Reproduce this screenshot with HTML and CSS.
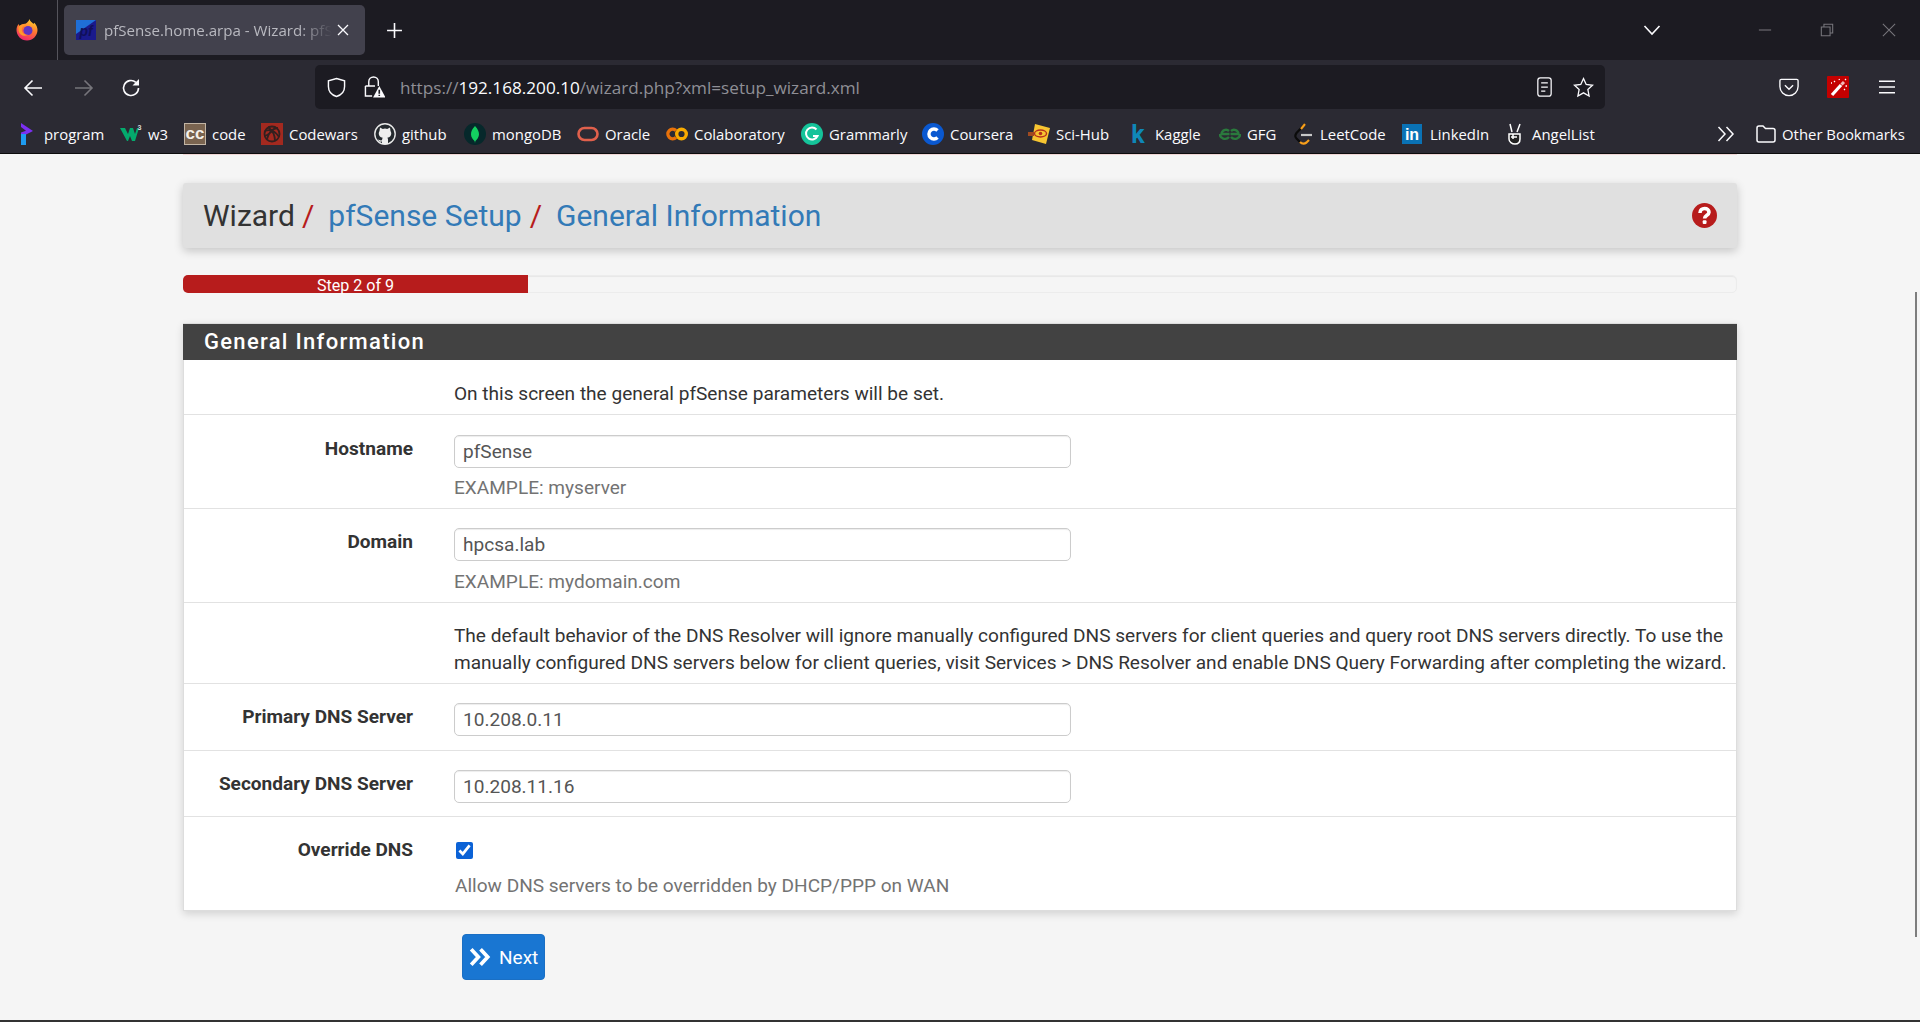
FILE: index.html
```html
<!DOCTYPE html>
<html lang="en">
<head>
<meta charset="utf-8">
<title>pfSense.home.arpa - Wizard: pfSense Setup: General Information</title>
<link rel="stylesheet" href="styles.css">
</head>
<body>
<header class="chrome">
  <div class="tabbar">
    <div class="ff-cell">
      <svg class="ff-logo" viewBox="0 0 22 22"><defs><linearGradient id="ffg" x1="0.7" y1="0" x2="0.3" y2="1"><stop offset="0" stop-color="#ffd52e"/><stop offset=".45" stop-color="#ff7a30"/><stop offset="1" stop-color="#f0226f"/></linearGradient></defs><path fill="url(#ffg)" d="M13.500 0c.3 2.200 2.500 3.200 4 5 .2-.5.5-1 .8-1.300C20.500 6 21.500 8.500 21.500 11c0 5.800-4.700 10.500-10.500 10.500S.5 16.800.5 11c0-2.300.8-4.500 2.200-6 .2.900.6 1.500 1.100 1.900C5 5.300 7 4.600 9.300 4.700c1.800-.9 3.700-2.500 4.200-4.700z"/><circle cx="12" cy="11.500" r="4.500" fill="#5f35c4"/><path fill="#ff9a2a" d="M2.500 8c2-2.500 5.500-3 7.500-1.800-2.800.3-4.500 2.300-4.200 4.800.3 3 3.200 5 6.200 4.700-3.800 2.300-8.500.5-9.300-3.800-.3-1.400-.3-2.800-.2-3.900z"/></svg>
    </div>
    <div class="tab">
      <svg class="favicon" viewBox="0 0 20 20"><rect width="20" height="20" fill="#1a1a8c"/><path fill="#1f6fd6" d="M0 0h20L0 14z"/><text x="3.500" y="15.500" class="fav-text">pf</text></svg>
      <span class="tab-title">pfSense.home.arpa - Wizard: pfSense Setup: General Information</span>
      <svg class="tab-close" viewBox="0 0 12 12"><path d="M1 1l10 10M11 1 1 11"/></svg>
    </div>
    <svg class="new-tab" viewBox="0 0 16 16"><path d="M8 1v14M1 8h14"/></svg>
    <div class="spring"></div>
    <svg class="tabs-list" viewBox="0 0 18 12"><path d="M1.500 2 9 10l7.500-8"/></svg>
    <svg class="win win-min" viewBox="0 0 16 16"><path d="M1 8h14"/></svg>
    <svg class="win win-res" viewBox="0 0 16 16"><path d="M1.500 4.500h10v10h-10zM4.500 4.500v-3h10v10h-3"/></svg>
    <svg class="win win-close" viewBox="0 0 16 16"><path d="M1 1l14 14M15 1 1 15"/></svg>
  </div>
  <div class="toolbar">
    <svg class="nav-ic" viewBox="0 0 20 20"><path d="M19 10H2M9.500 2.500 2 10l7.500 7.500"/></svg>
    <svg class="nav-ic nav-dim" viewBox="0 0 20 20"><path d="M1 10h17M10.500 2.500 18 10l-7.500 7.500"/></svg>
    <svg class="nav-ic" viewBox="0 0 20 20"><path d="M17.500 10a7.500 7.500 0 1 1-2.600-5.700"/><path class="solid" d="M18 1v6.500h-6.500z"/></svg>
    <div class="urlbar">
      <svg class="url-ic" viewBox="0 0 20 22"><path d="M10 1.500 18.500 4v6c0 5.500-3.500 9-8.500 10.500C5 19 1.500 15.500 1.500 10V4z"/></svg>
      <svg class="url-ic lock" viewBox="0 0 22 24"><path d="M5 11V6.500a5 5 0 0 1 10 0V11M1.500 11h10M1.500 11v10.500h7"/><path class="warn" d="M16 11l6.500 12h-13z"/><path class="warn-mark" d="M16 15v4M16 20.200v1.300"/></svg>
      <div class="url-text"><span class="url-dim">https://</span>192.168.200.10<span class="url-dim">/wizard.php?xml=setup_wizard.xml</span></div>
      <svg class="url-ic reader" viewBox="0 0 18 24"><rect x="1" y="1" width="16" height="22" rx="3"/><path d="M5 7h8M5 12h8M5 17h5"/></svg>
      <svg class="url-ic star" viewBox="0 0 24 24"><path d="M12 1.800l3.100 6.700 7.200.9-5.300 5 1.400 7.300-6.400-3.600-6.400 3.600 1.400-7.300-5.300-5 7.200-.9z"/></svg>
    </div>
    <svg class="url-ic pocket" viewBox="0 0 22 22"><path d="M2.500 2h17a1.500 1.500 0 0 1 1.500 1.500V10a10 10 0 0 1-20 0V3.500A1.500 1.500 0 0 1 2.500 2z"/><path d="M6.500 8.500 11 13l4.500-4.500"/></svg>
    <svg class="wand" viewBox="0 0 22 22"><rect width="22" height="22" rx="1" fill="#c40000"/><path d="M5 19 14 9" stroke="#fff" stroke-width="3.200"/><path d="M14.500 8.500 17 6" stroke="#f2b8b8" stroke-width="3"/><path d="M7 5l1 1M12 3l.5 1M19 3l-1 1M20 10h-1.500M17 13l1 1M4 7h1" stroke="#fff" stroke-width="1.300"/></svg>
    <svg class="burger" viewBox="0 0 16 14"><path d="M0 1.200h16M0 7h16M0 12.800h16"/></svg>
  </div>
  <nav class="bookmarks">
    <a class="bm"><span class="bm-ic"><svg viewBox="0 0 22 22"><path fill="#7b2ff2" d="M5 0l12 8-12 6v-4.500l5-1.700L5 4z"/><rect x="5" y="11" width="5" height="11" fill="#1e9bf0"/></svg></span>program</a>
    <a class="bm"><span class="bm-ic"><svg viewBox="0 0 22 22"><path fill="#04aa6d" d="M0 5h5l3 6 2-6h3l2 6 2-6h2l-4 13h-3l-2-5-2 5H7z"/><text x="17.500" y="7" class="bm-sup">3</text></svg></span>w3</a>
    <a class="bm"><span class="bm-ic"><svg viewBox="0 0 22 22"><rect width="22" height="22" fill="#7a6450"/><rect x=".5" y=".5" width="21" height="21" fill="none" stroke="#c2b5a5"/><text x="11" y="16" class="bm-cc">cc</text></svg></span>code</a>
    <a class="bm"><span class="bm-ic"><svg viewBox="0 0 22 22"><rect width="22" height="22" fill="#a3291f"/><g fill="none" stroke="#33201f" stroke-width="1.800"><circle cx="11" cy="11" r="7.500"/><path d="M4 8c5-2 10 0 14 6M7 4c4 3 7 7 7 14M17 5c-5 0-9 4-11 11M3.500 13c4-1 8-5 11-9"/></g></svg></span>Codewars</a>
    <a class="bm"><span class="bm-ic"><svg viewBox="0 0 22 22"><circle cx="11" cy="11" r="10.200" fill="#24292e" stroke="#e8e8e8" stroke-width="1.400"/><path fill="#eee" d="M6 4.500l2.800 1.400a7 7 0 0 1 4.400 0L16 4.500l.5 3.500c1 1.500 1 3.500 0 5-.9 1.100-2 1.500-3.200 1.700.4.500.7 1 .7 1.800V21H8v-2.500c-2.500.5-3.500-.5-4-2 1.200.3 2 1.200 4 .8 0-.8.300-1.800.7-2.600-1.200-.2-2.300-.6-3.200-1.700-1-1.500-1-3.500 0-5z"/></svg></span>github</a>
    <a class="bm"><span class="bm-ic"><svg viewBox="0 0 22 22"><circle cx="11" cy="11" r="11" fill="#06282b"/><path fill="#13d060" d="M11 3c3 3 4 6 4 8.500S13 16.500 11.400 18L11 20l-.4-2C9 16.500 7 14.500 7 11.500S8 6 11 3z"/></svg></span>mongoDB</a>
    <a class="bm"><span class="bm-ic"><svg viewBox="0 0 22 22"><rect x="1.500" y="5" width="19" height="12" rx="6" fill="none" stroke="#e0604c" stroke-width="2.600"/></svg></span>Oracle</a>
    <a class="bm"><span class="bm-ic"><svg viewBox="0 0 22 22"><g fill="none" stroke-width="3.400"><circle cx="15.500" cy="11" r="4.800" stroke="#f9ab00"/><path d="M10 7.500a4.800 4.800 0 1 0 0 7" stroke="#e8710a"/></g></svg></span>Colaboratory</a>
    <a class="bm"><span class="bm-ic"><svg viewBox="0 0 22 22"><circle cx="11" cy="11" r="11" fill="#15c39a"/><path fill="none" stroke="#fff" stroke-width="2" d="M15.500 6.500a6 6 0 1 0 1 6.500h-4.500"/></svg></span>Grammarly</a>
    <a class="bm"><span class="bm-ic"><svg viewBox="0 0 22 22"><circle cx="11" cy="11" r="11" fill="#0a58d0"/><path fill="none" stroke="#fff" stroke-width="3.400" d="M15.500 7.500a5 5 0 1 0 0 7"/></svg></span>Coursera</a>
    <a class="bm"><span class="bm-ic"><svg viewBox="0 0 22 22"><path fill="#f7c531" d="M7 1l15 4-4 16L4 17z"/><path fill="#a04a20" d="M0 9h6v4H0z"/><ellipse cx="12.500" cy="10.500" rx="6" ry="3.500" fill="none" stroke="#b5301c" stroke-width="1.400"/><circle cx="12.500" cy="10.500" r="1.800" fill="#b5301c"/></svg></span>Sci-Hub</a>
    <a class="bm"><span class="bm-ic"><svg class="bm-ic-open" viewBox="0 0 22 22"><text x="11" y="20" class="bm-k">k</text></svg></span>Kaggle</a>
    <a class="bm"><span class="bm-ic"><svg viewBox="0 0 22 22"><g fill="none" stroke="#2a7a3d" stroke-width="2.400"><path d="M10.500 11H2.500a4.500 4.500 0 0 1 7.500-3M1 11a5 4.500 0 0 0 9 3"/><path d="M11.500 11h8a4.500 4.500 0 0 0-7.500-3M21 11a5 4.500 0 0 1-9 3"/></g></svg></span>GFG</a>
    <a class="bm"><span class="bm-ic"><svg viewBox="0 0 22 22"><g fill="none" stroke-width="2.200"><path d="M13 1 4.500 10c-1.500 2-1.500 4 0 5.500L8 19" stroke="#0b0b0b"/><path d="M13 1 9 6" stroke="#f89f1b"/><path d="M8 19c2 2 4.500 2 6.500.5L17 17" stroke="#f89f1b"/><path d="M9 12h11" stroke="#c8c8c8"/></g></svg></span>LeetCode</a>
    <a class="bm"><span class="bm-ic"><svg viewBox="0 0 22 22"><rect y="1" width="20" height="20" fill="#0a72b5"/><text x="10" y="17" class="bm-in">in</text></svg></span>LinkedIn</a>
    <a class="bm"><span class="bm-ic"><svg viewBox="0 0 22 22"><g fill="none" stroke="#fff" stroke-width="1.500"><path d="M8 9 6 1M13 9l3-8"/><path fill="#222" d="M5 11h11v5c0 3-2 5-5 5s-6-2-6-5z"/><path d="M7 14h6M9 11v5"/></g></svg></span>AngelList</a>
    <span class="bm-rest">
      <svg class="bm-more" viewBox="0 0 18 16"><path d="M1.500 1 8 8l-6.500 7M9.500 1 16 8l-6.500 7"/></svg>
      <a class="bm bm-other"><svg class="folder" viewBox="0 0 20 18"><path d="M1 15V3a2 2 0 0 1 2-2h4l2.500 2.500H17a2 2 0 0 1 2 2V15a2 2 0 0 1-2 2H3a2 2 0 0 1-2-2z"/></svg>Other Bookmarks</a>
    </span>
  </nav>
</header>

<main class="page">
  <div class="nav-edge"></div>
  <div class="container">
    <div class="page-title">
      <h1 class="crumbs">
        <span>Wizard</span><i class="sep">/</i><a class="crumb-link">pfSense Setup</a><i class="sep">/</i><a class="crumb-link">General Information</a>
      </h1>
      <svg class="help" viewBox="0 0 25 25"><circle cx="12.500" cy="12.500" r="12.500" fill="#b71c1c"/><path fill="none" stroke="#fff" stroke-width="3.600" d="M8 10c0-3 2-4.500 4.600-4.500S17 7 17 9.300c0 3-4.400 3-4.400 6.200"/><rect x="10.700" y="17.300" width="3.800" height="3.600" rx="1" fill="#fff"/></svg>
    </div>

    <div class="progress"><div class="progress-fill">Step 2 of 9</div></div>

    <section class="panel">
      <h2 class="panel-head">General Information</h2>
      <div class="row row-intro">
        <div class="label"></div>
        <div class="ctl">On this screen the general pfSense parameters will be set.</div>
      </div>
      <div class="row row-help">
        <label class="label">Hostname</label>
        <div class="ctl"><input class="field" type="text" value="pfSense"><div class="hint">EXAMPLE: myserver</div></div>
      </div>
      <div class="row row-help row-help-up">
        <label class="label">Domain</label>
        <div class="ctl"><input class="field" type="text" value="hpcsa.lab"><div class="hint hint-down">EXAMPLE: mydomain.com</div></div>
      </div>
      <div class="row row-note">
        <div class="label"></div>
        <div class="ctl ctl-wide">The default behavior of the DNS Resolver will ignore manually configured DNS servers for client queries and query root DNS servers directly. To use the manually configured DNS servers below for client queries, visit Services &gt; DNS Resolver and enable DNS Query Forwarding after completing the wizard.</div>
      </div>
      <div class="row row-plain">
        <label class="label">Primary DNS Server</label>
        <div class="ctl"><input class="field" type="text" value="10.208.0.11"></div>
      </div>
      <div class="row row-plain row-tight">
        <label class="label">Secondary DNS Server</label>
        <div class="ctl"><input class="field" type="text" value="10.208.11.16"></div>
      </div>
      <div class="row row-check">
        <label class="label">Override DNS</label>
        <div class="ctl">
          <input class="check" type="checkbox" checked>
          <div class="hint hint-check">Allow DNS servers to be overridden by DHCP/PPP on WAN</div>
        </div>
      </div>
    </section>

    <button class="next" type="button">
      <svg class="next-ic" viewBox="0 0 20 18"><path d="M2 2l6.500 7L2 16M10.500 2 17 9l-6.500 7"/></svg>Next
    </button>
  </div>
  <div class="scrollthumb"></div>
</main>
</body>
</html>
```

FILE: styles.css
```css
* { box-sizing: border-box; }
html, body { margin: 0; padding: 0; height: 1022px; overflow: hidden; }
body { display: flex; flex-direction: column; font-family: Roboto, "Liberation Sans", sans-serif; background: #f5f5f5; }

/* browser chrome */
.chrome { font-family: "Open Sans", "Noto Sans", sans-serif; color: #fbfbfe; flex: none; }
svg { display: block; flex: none; }

.tabbar { height: 60px; background: #1c1b22; display: flex; align-items: center; }
.ff-cell { width: 58px; height: 60px; border-right: 1px solid #55545c; display: flex; align-items: center; padding-left: 16px; }
.ff-logo { width: 22px; height: 22px; }
.tab { width: 301px; height: 50px; margin-left: 6px; background: #42414d; border-radius: 5px; display: flex; align-items: center; padding-left: 12px; position: relative; }
.favicon { width: 20px; height: 20px; }
.fav-text { font: italic 700 14px "Liberation Sans", sans-serif; fill: #10105a; }
.tab-title { margin-left: 8px; width: 228px; white-space: nowrap; overflow: hidden; font-size: 15.100px; color: #b9b9c0; -webkit-mask-image: linear-gradient(to right, #000 85%, transparent 100%); mask-image: linear-gradient(to right, #000 85%, transparent 100%); }
.tab-close { width: 12px; height: 12px; margin-left: 5px; fill: none; stroke: #fbfbfe; stroke-width: 1.300; }
.new-tab { width: 17px; height: 17px; margin-left: 21px; fill: none; stroke: #fbfbfe; stroke-width: 1.500; }
.spring { flex: 1; }
.tabs-list { width: 18px; height: 12px; fill: none; stroke: #fbfbfe; stroke-width: 1.600; margin-right: 97px; }
.win { width: 14px; height: 14px; fill: none; stroke: #77767c; stroke-width: 1.200; }
.win-min { margin-right: 48px; }
.win-res { margin-right: 48px; }
.win-close { margin-right: 24px; }

.toolbar { height: 56px; background: #2b2a33; display: flex; align-items: center; padding-left: 23px; }
.nav-ic { width: 20px; height: 20px; margin-right: 31px; fill: none; stroke: #fbfbfe; stroke-width: 1.600; }
.nav-dim { stroke: #76757b; margin-right: 27px; }
.nav-ic .solid { fill: #fbfbfe; stroke: none; }
.urlbar { position: absolute; left: 315px; top: 65px; width: 1290px; height: 44px; background: #1c1b22; border-radius: 5px; display: flex; align-items: center; padding-left: 12px; }
.url-ic { width: 19px; height: 21px; fill: none; stroke: #fbfbfe; stroke-width: 1.500; }
.lock { width: 21px; height: 24px; margin-left: 18px; }
.lock .warn { fill: #fbfbfe; stroke: none; }
.lock .warn-mark { stroke: #1c1b22; stroke-width: 1.700; }
.url-text { margin-left: 15px; width: 1136px; font-size: 17.150px; line-height: 24px; padding-top: 2px; color: #fbfbfe; white-space: nowrap; }
.url-dim { color: #8f8f96; }
.reader { width: 17px; height: 20px; margin-left: 0; }
.star { width: 21px; height: 21px; margin-left: 20px; }
.pocket { position: absolute; left: 1779px; top: 77px; width: 20px; height: 21px; }
.wand { position: absolute; left: 1827px; top: 76px; width: 22px; height: 22px; fill: none; }
.burger { position: absolute; left: 1879px; top: 80px; width: 16px; height: 14px; fill: none; stroke: #fbfbfe; stroke-width: 1.500; }

.bookmarks { height: 38px; background: #2b2a33; border-bottom: 1px solid #0c0c0d; padding: 0 0 1px 16px; display: grid; grid-template-columns: 104px 64px 77px 113px 90px 113px 89px 135px 121px 106px 99px 92px 73px 110px 102px 213px 1fr; align-items: center; font-size: 14.900px; }
.bm { display: flex; align-items: center; gap: 6px; white-space: nowrap; color: #fbfbfe; }
.bm-ic { width: 22px; height: 22px; flex: none; }
.bm-ic svg { width: 22px; height: 22px; }
.bm-ic .bm-ic-open { overflow: visible; }
.bm-sup { font: 700 7px Roboto, sans-serif; fill: #d8d8d8; }
.bm-cc { font: 700 17px "Liberation Sans", sans-serif; fill: #f4efe8; text-anchor: middle; }
.bm-k { font: 700 25px Roboto, sans-serif; fill: #0f87b8; text-anchor: middle; }
.bm-in { font: 700 16px "Liberation Sans", sans-serif; fill: #fff; text-anchor: middle; }
.bm-rest { display: flex; align-items: center; }
.bm-more { width: 18px; height: 16px; fill: none; stroke: #fbfbfe; stroke-width: 1.500; margin-right: 21px; }
.folder { width: 20px; height: 18px; fill: none; stroke: #fbfbfe; stroke-width: 1.500; }
.bm-other { gap: 6px; }

/* page */
.page { flex: 1; position: relative; background: #f5f5f5; border-bottom: 2px solid #333; min-height: 0; }
.nav-edge { height: 1px; margin: 0 183px; background: #f0d6d6; }
.container { width: 1554px; margin: 28px auto 0; }

.page-title { height: 65px; background: #e0e0e0; border-radius: 3px; box-shadow: 0 3px 10px rgba(0,0,0,.2); display: flex; align-items: center; justify-content: space-between; padding: 0 20px 0 20px; }
.crumbs { margin: 0; font-size: 30px; font-weight: 400; color: #333; display: flex; align-items: baseline; }
.sep { font-style: normal; color: #b71c1c; margin: 0 14px 0 7px; }
.crumb-link { color: #337ab7; }
.crumb-link + .sep { margin: 0 14px 0 8px; }
.help { width: 25px; height: 25px; }

.progress { height: 18px; margin-top: 27px; background: #f5f5f5; border: 1px solid #ececec; border-radius: 5px; box-shadow: inset 0 1px 1px rgba(0,0,0,.06); position: relative; }
.progress-fill { position: absolute; left: -1px; top: -1px; bottom: -1px; width: 345px; background: #b71c1c; border-radius: 5px 0 0 5px; color: #fff; font-size: 16.100px; line-height: 21px; text-align: center; }

.panel { margin-top: 30px; background: #fff; border: 1px solid #ddd; border-top: 0; box-shadow: 0 3px 8px rgba(0,0,0,.14); }
.panel-head { margin: 0 -1px; height: 37px; background: #424242; color: #fff; font-size: 22px; font-weight: 500; line-height: 36px; padding-left: 21px; letter-spacing: 1.300px; border-top: 1px solid #ddd; }

.row { display: grid; grid-template-columns: 229px 1fr; column-gap: 41px; border-bottom: 1px solid #e2e2e2; font-size: 19.070px; line-height: 27px; color: #333; }
.row:last-child { border-bottom: 0; }
.label { font-weight: 700; text-align: right; }
.ctl { min-width: 0; }
.row-intro { padding: 20px 0 7px; }
.row-note { padding: 19px 0 7px; }
.row-help { padding: 20px 0 7px; }
.row-help-up { padding-top: 19px; }
.row-plain { padding: 19px 0 14px; }
.row-tight { padding-bottom: 13px; }
.row-check { padding: 20px 0 11px; }
.row-check .label { margin-top: -1px; }
.ctl-wide { padding-right: 8px; }

.field { display: block; width: 617px; height: 33px; padding: 0 8px; border: 1px solid #ccc; border-radius: 5px; font: 400 19.070px Roboto, sans-serif; color: #555; background: #fff; box-shadow: inset 0 1px 1px rgba(0,0,0,.075); }
.hint { margin-top: 6px; color: #737373; }
.hint-down { margin-top: 7px; }
.hint-check { margin-top: 13px; padding-left: 1px; }
.check { display: block; width: 17px; height: 17px; margin: 5px 0 0 2px; accent-color: #0b62d6; }

.next { display: flex; align-items: center; gap: 8px; height: 46px; width: 83px; margin: 23px 0 0 279px; padding: 0 0 0 6px; background: #1976d2; border: 1px solid #1a6fc4; border-radius: 4px; color: #fff; font: 400 19px Roboto, sans-serif; }
.next-ic { width: 22px; height: 20px; fill: none; stroke: #fff; stroke-width: 3.400; }

.scrollthumb { position: absolute; right: 3px; top: 138px; width: 2px; height: 645px; background: #7d7d7d; }
```
